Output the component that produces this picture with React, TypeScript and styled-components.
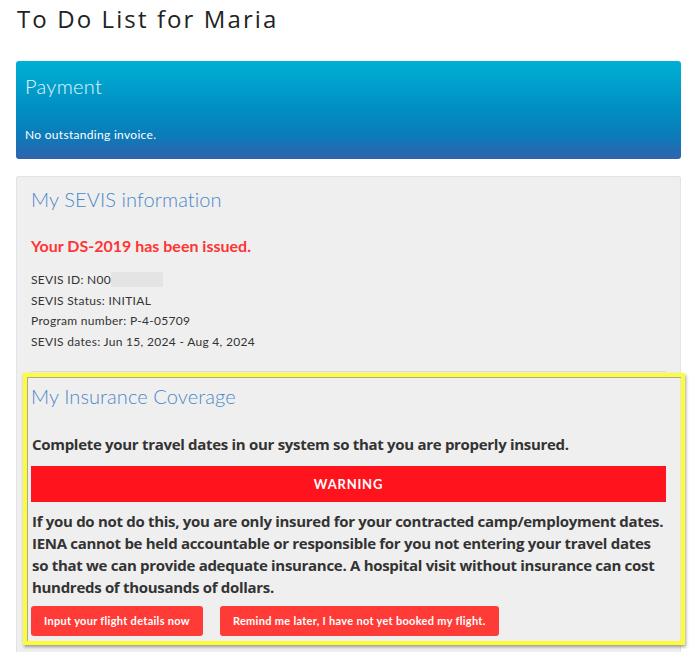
import React from 'react';
import styled, { createGlobalStyle } from 'styled-components';

const GlobalStyle = createGlobalStyle`
  body {
    margin: 0;
    background: #ffffff;
    font-family: Lato, "Open Sans", "Liberation Sans", sans-serif;
    color: #333333;
  }
`;

const Page = styled.div`
  width: 665px;
  padding: 0 0 0 16px;
`;

const PageTitle = styled.h1`
  margin: 0;
  padding: 1px 0 0 1px;
  height: 61px;
  box-sizing: border-box;
  font-family: "Open Sans", Lato, sans-serif;
  font-size: 24px;
  line-height: 36px;
  font-weight: 400;
  letter-spacing: 2.1px;
  color: #222222;
`;

const PaymentCard = styled.div`
  height: 98px;
  box-sizing: border-box;
  padding: 13px 9px 0;
  border-radius: 3px;
  background: linear-gradient(180deg, #00b0d4 0%, #0091c4 45%, #0a7cba 75%, #3163ad 100%);
  color: #ffffff;
`;

const PaymentTitle = styled.div`
  font-size: 20px;
  line-height: 24px;
  font-weight: 300;
  letter-spacing: 0.3px;
  color: #e6f5fa;
`;

const PaymentText = styled.div`
  margin-top: 29px;
  font-size: 12px;
  line-height: 16px;
  letter-spacing: 0.3px;
`;

const InfoCard = styled.div`
  margin-top: 17px;
  border: 1px solid #e3e3e3;
  border-radius: 2px;
  background: #efefef;
  padding: 10px 14px 0;
`;

const SectionTitle = styled.h2`
  margin: 0;
  font-size: 20px;
  line-height: 24px;
  font-weight: 300;
  letter-spacing: 0.1px;
  color: #4b88c8;
`;

const IssuedNotice = styled.div`
  margin-top: 25px;
  font-size: 16px;
  line-height: 20px;
  font-weight: 700;
  color: #ff3434;
`;

const InfoList = styled.div`
  margin-top: 14px;
  padding-bottom: 18px;
  font-size: 12px;
  line-height: 20.7px;
  letter-spacing: 0.3px;
  color: #333333;
`;

const Redacted = styled.span`
  display: inline-block;
  width: 52px;
  height: 15px;
  vertical-align: -3px;
  background: #e4e4e4;
`;

const InsuranceSection = styled.div`
  position: relative;
  border-top: 1px solid #dddddd;
  padding: 12px 0 20px;
`;

// yellow annotation frame laid over the insurance block
const Highlight = styled.div`
  position: absolute;
  left: -8px;
  right: -19px;
  top: 1px;
  bottom: 11px;
  border: 4px solid #fcfd38;
  box-shadow: inset 1px 1px 0 #a8a8a8, 1px 2px 3px rgba(0, 0, 0, 0.35);
  pointer-events: none;
`;

const Lead = styled.p`
  margin: 25px 0 0 1px;
  font-family: "Open Sans", Lato, sans-serif;
  font-size: 15px;
  line-height: 22px;
  font-weight: 700;
  letter-spacing: -0.3px;
  color: #333333;
`;

const WarningBar = styled.div`
  margin-top: 11px;
  height: 36px;
  background: #ff141e;
  color: #ffffff;
  display: flex;
  align-items: center;
  justify-content: center;
  font-size: 13px;
  font-weight: 700;
  letter-spacing: 0.8px;
`;

const Body = styled.p`
  margin: 8px 0 0 1px;
  font-family: "Open Sans", Lato, sans-serif;
  font-size: 15px;
  line-height: 22px;
  font-weight: 700;
  letter-spacing: -0.3px;
  color: #333333;
`;

const ButtonRow = styled.div`
  display: flex;
  gap: 17px;
  margin-top: 8px;
`;

const ActionButton = styled.button`
  height: 30px;
  padding: 0 13px;
  border: none;
  border-radius: 3px;
  background: #ff3b37;
  color: #ffffff;
  font-family: inherit;
  font-size: 11px;
  font-weight: 700;
  letter-spacing: 0.3px;
  cursor: pointer;
`;

const App = () => {
    return (
        <Page>
            <GlobalStyle/>
            <PageTitle>To Do List for Maria</PageTitle>

            <PaymentCard>
                <PaymentTitle>Payment</PaymentTitle>
                <PaymentText>No outstanding invoice.</PaymentText>
            </PaymentCard>

            <InfoCard>
                <SectionTitle>My SEVIS information</SectionTitle>
                <IssuedNotice>Your DS-2019 has been issued.</IssuedNotice>
                <InfoList>
                    <div>SEVIS ID: N00<Redacted/></div>
                    <div>SEVIS Status: INITIAL</div>
                    <div>Program number: P-4-05709</div>
                    <div>SEVIS dates: Jun 15, 2024 - Aug 4, 2024</div>
                </InfoList>

                <InsuranceSection>
                    <Highlight/>
                    <SectionTitle>My Insurance Coverage</SectionTitle>
                    <Lead>Complete your travel dates in our system so that you are properly insured.</Lead>
                    <WarningBar>WARNING</WarningBar>
                    <Body>
                        If you do not do this, you are only insured for your contracted camp/employment dates.
                        IENA cannot be held accountable or responsible for you not entering your travel dates
                        so that we can provide adequate insurance. A hospital visit without insurance can cost
                        hundreds of thousands of dollars.
                    </Body>
                    <ButtonRow>
                        <ActionButton>Input your flight details now</ActionButton>
                        <ActionButton>Remind me later, I have not yet booked my flight.</ActionButton>
                    </ButtonRow>
                </InsuranceSection>
            </InfoCard>
        </Page>
    );
};

export default App;
